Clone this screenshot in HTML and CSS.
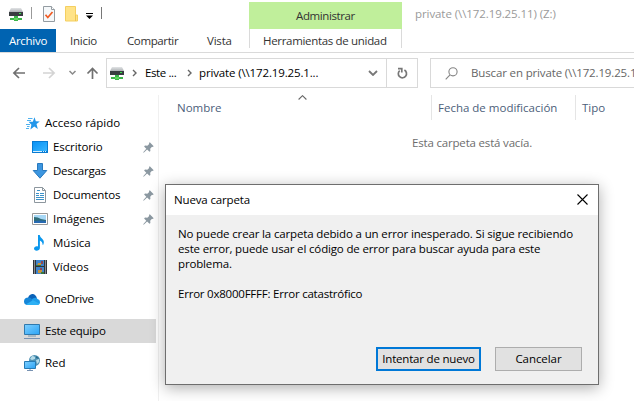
FILE: index.html
```html
<!DOCTYPE html>
<html lang="es">
<head>
<meta charset="utf-8">
<title>private (Z:)</title>
<link rel="stylesheet" href="styles.css">
</head>
<body>
<svg class="defs" width="0" height="0">
  <defs>
    <linearGradient id="blue" x1="0" y1="0" x2="1" y2="1"><stop offset="0" stop-color="#7fd0ff"/><stop offset="1" stop-color="#2aa3f5"/></linearGradient>
    <linearGradient id="desk" x1="0" y1="0" x2="1" y2="1"><stop offset="0" stop-color="#0a92f5"/><stop offset="1" stop-color="#38b6ff"/></linearGradient>
    <linearGradient id="steel" x1="0" y1="0" x2="0" y2="1"><stop offset="0" stop-color="#e2e4e6"/><stop offset="1" stop-color="#aeb2b5"/></linearGradient>
    <symbol id="drive" viewBox="0 0 14 13">
      <path d="M2 0h10l2 4H0z" fill="url(#steel)"/>
      <path d="M0 4h14v4H0z" fill="#393d41"/>
      <path d="M10 5h2v1h-2z" fill="#36e24a"/>
      <path d="M5 8h4v2h4v2H9v1H5v-1H1v-2h4z" fill="#3cb54a"/>
      <path d="M5 10h4v2H5z" fill="#62d65f"/>
    </symbol>
    <symbol id="pin" viewBox="0 0 11 11">
      <path d="M6.8.3 10.7 4.2 9.7 5 9 4.8 7.2 6.7 7.4 9 6.5 9.8 4.1 7.5.7 10.7.2 10.3 3.3 6.7 1.1 4.5 2 3.6 4.3 3.8 6.2 2 6 1.1z" fill="#8b98a1"/>
    </symbol>
  </defs>
</svg>
<div class="window">
  <header class="titlebar">
    <div class="quick">
      <svg class="q-drive" width="14" height="13"><use href="#drive"/></svg>
      <i class="sep"></i>
      <svg class="q-check" width="12" height="16" viewBox="0 0 12 16"><path d="M.5.5h8l3 3v12H.5z" fill="#f5f8fa" stroke="#949ca2"/><path d="M8.5.5v3h3" fill="#fff" stroke="#949ca2"/><path d="m2.5 8.8 2.3 2.7L9.5 6" fill="none" stroke="#f05a22" stroke-width="1.7"/></svg>
      <svg class="q-folder" width="13" height="16" viewBox="0 0 13 16"><path d="M.5.5h10v8.5h2v6H.5z" fill="#ffe388" stroke="#f4cf61"/><path d="M10.5 9v6" stroke="#edc553"/></svg>
      <svg class="q-more" width="7" height="6" viewBox="0 0 7 6"><path d="M0 0h7v1H0zM0 2.500h7L3.500 6z" fill="#000"/></svg>
      <i class="sep dark"></i>
    </div>
    <div class="context"><span class="t-adm">Administrar</span></div>
    <div class="caption"><span class="t-cap">private (\\172.19.25.11) (Z:)</span></div>
  </header>
  <nav class="tabs">
    <div class="tab file"><span class="t-arc">Archivo</span></div>
    <div class="tab inicio"><span>Inicio</span></div>
    <div class="tab compartir"><span>Compartir</span></div>
    <div class="tab vista"><span>Vista</span></div>
    <div class="tab tools"><span class="t-her">Herramientas de unidad</span></div>
  </nav>
  <div class="addressbar">
    <div class="arrows">
      <svg width="94" height="12" viewBox="0 0 94 12" fill="none" stroke-width="1.7">
        <path d="M13 6H2M7 1 1.900 6 7 11" stroke="#707070"/>
        <path d="M31 6h11M37 1l5.100 5L37 11" stroke="#d4d4d4"/>
        <path d="m57.500 4 3 3 3-3" stroke="#8a8a8a" stroke-width="1.500"/>
        <path d="M80.500 12V1.500M75.500 6.500l5-5 5 5" stroke="#707070"/>
      </svg>
    </div>
    <div class="path">
      <svg class="p-drive" width="14" height="13"><use href="#drive"/></svg>
      <svg class="chev c1" width="5" height="8" viewBox="0 0 5 8"><path d="m1 1 3 3-3 3" fill="none" stroke="#666" stroke-width="1.400"/></svg>
      <span class="crumb t-este">Este ...</span>
      <svg class="chev c2" width="5" height="8" viewBox="0 0 5 8"><path d="m1 1 3 3-3 3" fill="none" stroke="#666" stroke-width="1.400"/></svg>
      <span class="crumb t-priv">private (\\172.19.25.1...</span>
      <svg class="down" width="10" height="6" viewBox="0 0 10 6"><path d="m1 1 4 4 4-4" fill="none" stroke="#777" stroke-width="1.800"/></svg>
      <div class="refresh"><svg width="11" height="12" viewBox="0 0 11 12"><path d="M7.400 3.100a4.100 4.100 0 1 1-4.700.5M1 1.700h3.800v3.800" fill="none" stroke="#777" stroke-width="1.700"/></svg></div>
    </div>
    <div class="search">
      <svg width="13" height="13" viewBox="0 0 13 13" fill="none" stroke="#858585" stroke-width="1.100"><circle cx="8" cy="4.800" r="4.100"/><path d="M5 7.800.7 12.300"/></svg>
      <span class="t-bus">Buscar en private (\\172.19.25.1</span>
    </div>
  </div>
  <div class="main">
    <aside class="tree">
      <div class="row top"><svg width="14" height="13" viewBox="0 0 14 13"><path d="m8.500.3 1.300 4 4 .2-3.300 2.600 1.300 4.800-3.500-2.500-3.900 3 1-4.600-2.800-3 4.200-.1z" fill="#2196ea"/><path d="M2 1.500h4.500M1 3.500h4M0 7.500h4M1 9.500h2.500M0 11.500h3" stroke="#4eb1ef"/></svg><span class="t-acc">Acceso rápido</span></div>
      <div class="row sub"><svg width="16" height="12" viewBox="0 0 16 12"><path d="M0 0h16v12H0z" fill="#087bd2"/><path d="M1 1h14v9H1z" fill="url(#desk)"/><path d="M1 10.500h9M11 10.500h1M13 10.500h1" stroke="#d8f0ff"/></svg><span class="t-esc">Escritorio</span><svg class="pin" width="11" height="11"><use href="#pin"/></svg></div>
      <div class="row sub"><svg width="16" height="16" viewBox="0 0 16 16"><path d="M5.500.5h5v7h4.300L8 15.200 1.200 7.500h4.300z" fill="#3c96e0" stroke="#2879be"/></svg><span class="t-des">Descargas</span><svg class="pin" width="11" height="11"><use href="#pin"/></svg></div>
      <div class="row sub"><svg width="16" height="16" viewBox="0 0 16 16"><path d="M2.500.5h8l3 3v12h-11z" fill="#fff" stroke="#8d979e"/><path d="M10.500.5v3h3" fill="none" stroke="#8d979e"/><path d="M4 6.500h3M4 8.500h3M8 6.500h4M8 8.500h4M4 10.500h8M4 12.500h8M5 3.500h3" stroke="#3b92c9"/></svg><span class="t-doc">Documentos</span><svg class="pin" width="11" height="11"><use href="#pin"/></svg></div>
      <div class="row sub"><svg width="16" height="12" viewBox="0 0 16 12"><path d="M.5.5h15v11H.5z" fill="#fff" stroke="#999"/><path d="M2 2h12v8H2z" fill="#a7d8f6"/><path d="M2 4q4 0 7 2l5 1v3H2z" fill="#306d78"/><path d="M2 8q6-1 12 0v2H2z" fill="#286ab1"/></svg><span class="t-ima">Imágenes</span><svg class="pin" width="11" height="11"><use href="#pin"/></svg></div>
      <div class="row sub"><svg width="16" height="16" viewBox="0 0 16 16"><path d="M6 0h1.700q.4 2.500 2.700 4 2.500 2.200.7 6l-.7-.5q.7-2.500-2.500-4V13c0 3.200-5.900 3.800-5.900.6 0-2 2.200-2.900 4-2.200z" fill="#0a97ed"/></svg><span class="t-mus">Música</span></div>
      <div class="row sub"><svg width="16" height="16" viewBox="0 0 16 16"><path d="M1 1h14v14H1z" fill="#30343a"/><path d="M4 1h8v6H4zM4 8h8v7H4z" fill="#3e84ce"/><path d="M6 4h3v3H5zM6 11h4v3H6z" fill="#c89438"/><path d="M9 2h2v3H9zM8 9h2v2H8z" fill="#8d4654"/><path d="M4 6h5v1H4zM9 13h3v2H9z" fill="#397740"/><path d="M2.500 1.500V15M13.500 1.500V15" stroke="#e2e2e2" stroke-dasharray="1 1"/></svg><span class="t-vid">Vídeos</span></div>
      <div class="row root"><svg width="16" height="11" viewBox="0 0 16 11"><path d="M4 5Q4 1 8 0q3.600-.2 5 4.500L9 9H4z" fill="#0b62b8"/><path d="M0 7.500Q0 3.700 4.500 3.500q2.500.1 4 2.200L6 11H3Q0 10.500 0 7.500z" fill="#1686d8"/><path d="M8 5q4-2.400 5.500 0 2.500.7 2.500 3 0 3-3 3H7z" fill="#1e9be8"/><path d="M2 10.300 9 6.200l6.500 3.600Q14.500 11 13 11H3.500z" fill="#2db0f4"/></svg><span class="t-one">OneDrive</span></div>
      <div class="row root selected"><svg width="16" height="15" viewBox="0 0 16 15"><path d="M.5.5h15v10H.5z" fill="url(#blue)" stroke="#3079ad"/><path d="M4 12h8" stroke="#7b98ac"/><path d="M0 14.500h16" stroke="#7892b2"/></svg><span class="t-equ">Este equipo</span></div>
      <div class="row root"><svg width="16" height="16" viewBox="0 0 16 16"><circle cx="10.500" cy="5.500" r="5.500" fill="#4f92b4"/><path d="M8 1q4 0 3 3l-3 1-2-1zM12 5l3-1v3l-2 2z" fill="#b6dbe8"/><path d="M12 1q2 1 3 3l-3-1z" fill="#276887"/><path d="M.5 6.500h11v7H.5z" fill="url(#blue)" stroke="#267bb4"/><path d="M6 14v1M3 15.500h6" stroke="#7892b2"/></svg><span class="t-red">Red</span></div>
    </aside>
    <section class="files">
      <div class="columns">
        <div class="col name"><span class="t-nom">Nombre</span><svg class="sort" width="9" height="5" viewBox="0 0 9 5"><path d="m.6 4.500 3.900-3.800 3.900 3.800" fill="none" stroke="#666" stroke-width="1.100"/></svg></div>
        <div class="col date"><span class="t-fec">Fecha de modificación</span></div>
        <div class="col type"><span class="t-tip">Tipo</span></div>
      </div>
      <div class="empty"><span class="t-emp">Esta carpeta está vacía.</span></div>
    </section>
  </div>
</div>
<div class="dialog" role="dialog">
  <div class="dialog-title"><span class="t-nue">Nueva carpeta</span><svg width="11" height="11" viewBox="0 0 11 11"><path d="m.5.5 10 10M10.500.5l-10 10" stroke="#000" stroke-width="1.100"/></svg></div>
  <div class="dialog-body">
    <p class="message">No puede crear la carpeta debido a un error inesperado. Si sigue recibiendo este error, puede usar el código de error para buscar ayuda para este problema.</p>
    <p class="code">Error 0x8000FFFF: Error catastrófico</p>
    <div class="buttons"><button class="primary"><span class="t-int">Intentar de nuevo</span></button><button class="cancel"><span class="t-can">Cancelar</span></button></div>
  </div>
</div>
</body>
</html>
```
FILE: styles.css
```css
* { box-sizing: border-box; }
body { margin: 0; width: 634px; height: 401px; overflow: hidden; background: #fff; color: #000; font: 11.5px/16px "Open Sans", "Noto Sans", sans-serif; }
span { white-space: nowrap; }
svg { display: block; flex: none; }
.defs { position: absolute; }
.window { display: flex; flex-direction: column; width: 634px; height: 401px; }
.titlebar { display: flex; height: 29px; }
.quick { display: flex; align-items: center; width: 249px; padding: 0 0 1px 9px; }
.sep { width: 1px; height: 12px; margin: -3px 11px 0 8px; background: #999; }
.sep.dark { margin: -3px 0 0 8px; background: #777; }
.q-drive { margin-top: 1px; }
.q-folder { margin-left: 10px; }
.q-more { margin: 3px 0 0 8px; }
.context { width: 153px; height: 27px; margin-top: 2px; background: #c0ef9b; color: #333; text-align: center; padding-top: 6px; }
.caption { padding: 6px 0 0 13px; color: #9a9a9a; }
.tabs { display: flex; height: 24px; border-bottom: 1px solid #dadada; color: #333; }
.tab { padding-top: 4px; }
.file { width: 56px; padding-left: 9px; background: #0063b1; color: #fff; }
.inicio { width: 57px; padding-left: 14px; letter-spacing: -.25px; }
.compartir { width: 80px; padding-left: 14px; letter-spacing: -.38px; }
.vista { width: 56px; padding-left: 14px; letter-spacing: -.2px; }
.tools { width: 153px; height: 19px; padding-left: 13px; border: solid #dadada; border-width: 0 1px; }
.addressbar { display: flex; height: 42px; padding-top: 5px; }
.arrows { width: 106px; padding: 9px 0 0 12px; }
.path { display: flex; align-items: center; width: 312px; height: 30px; border: 1px solid #d9d9d9; }
.p-drive { margin-left: 3px; }
.c1 { margin-left: 8px; }
.c2 { margin-left: 8px; }
.crumb { margin-left: 7px; }
.t-este { width: 34px; margin-left: 8px; letter-spacing: -.4px; }
.t-priv { width: 162px; letter-spacing: -.14px; }
.down { margin-left: 7px; }
.refresh { display: flex; align-items: center; justify-content: center; width: 31px; height: 28px; margin-left: auto; border-left: 1px solid #d9d9d9; }
.search { display: flex; align-items: center; width: 204px; height: 30px; margin-left: 12px; padding-left: 14px; border: 1px solid #d9d9d9; border-right: 0; color: #666; }
.search span { margin-left: 13px; letter-spacing: -.14px; }
.main { display: flex; flex: 1; }
.tree { width: 159px; padding-top: 16px; border-right: 1px solid #f0f0f0; }
.row { display: flex; align-items: center; width: 156px; height: 24px; }
.top { padding-left: 26px; }
.top span { margin-left: 5px; }
.sub { padding-left: 32px; }
.sub span { width: 90px; margin-left: 5px; }
.pin { margin-top: 1px; }
.root { margin-top: 8px; padding-left: 24px; }
.root span { margin-left: 5px; }
.selected { background: #d9d9d9; }
.files { flex: 1; }
.columns { display: flex; height: 25px; color: #4c607a; }
.col { padding-top: 5px; }
.name { display: flex; width: 272px; padding-left: 18px; }
.t-nom { width: 45px; }
.sort { margin: -5px 0 0 76px; }
.date { width: 144px; padding-left: 6px; border-left: 1px solid #e5e5e5; }
.type { padding-left: 6px; border-left: 1px solid #e5e5e5; }
.empty { padding: 15px 0 0 253px; color: #6d6d6d; letter-spacing: -.18px; }
.dialog { position: absolute; left: 165px; top: 184px; width: 434px; height: 201px; border: 1px solid #6e6e6e; background: #f0f0f0; box-shadow: 0 3px 14px rgba(0,0,0,.32); }
.dialog-title { display: flex; justify-content: space-between; height: 30px; padding: 7px 10px 0 8px; background: #fff; }
.dialog-title svg { margin-top: 2px; }
.dialog-body { padding: 11px 16px 0 12px; }
.dialog-body p { margin: 0 0 15px; line-height: 15px; }
.message { letter-spacing: -.15px; }
.code { letter-spacing: -.22px; }
.buttons { display: flex; justify-content: flex-end; gap: 14px; margin-top: 46px; }
button { height: 24px; padding: 0; background: #e1e1e1; color: #000; font: inherit; border: 1px solid #adadad; }
.primary { width: 105px; border: 2px solid #0078d7; }
.cancel { width: 87px; }
.t-adm { letter-spacing: -.4px; }
.t-her { letter-spacing: -.32px; }
.t-cap { letter-spacing: -.08px; }
.t-arc { letter-spacing: -.3px; }
.t-esc, .t-doc { letter-spacing: -.1px; }
.t-des, .t-one { letter-spacing: -.25px; }
.t-ima, .t-can { letter-spacing: -.06px; }
.t-equ, .t-int { letter-spacing: -.2px; }
.t-nue { letter-spacing: -.15px; }
```
